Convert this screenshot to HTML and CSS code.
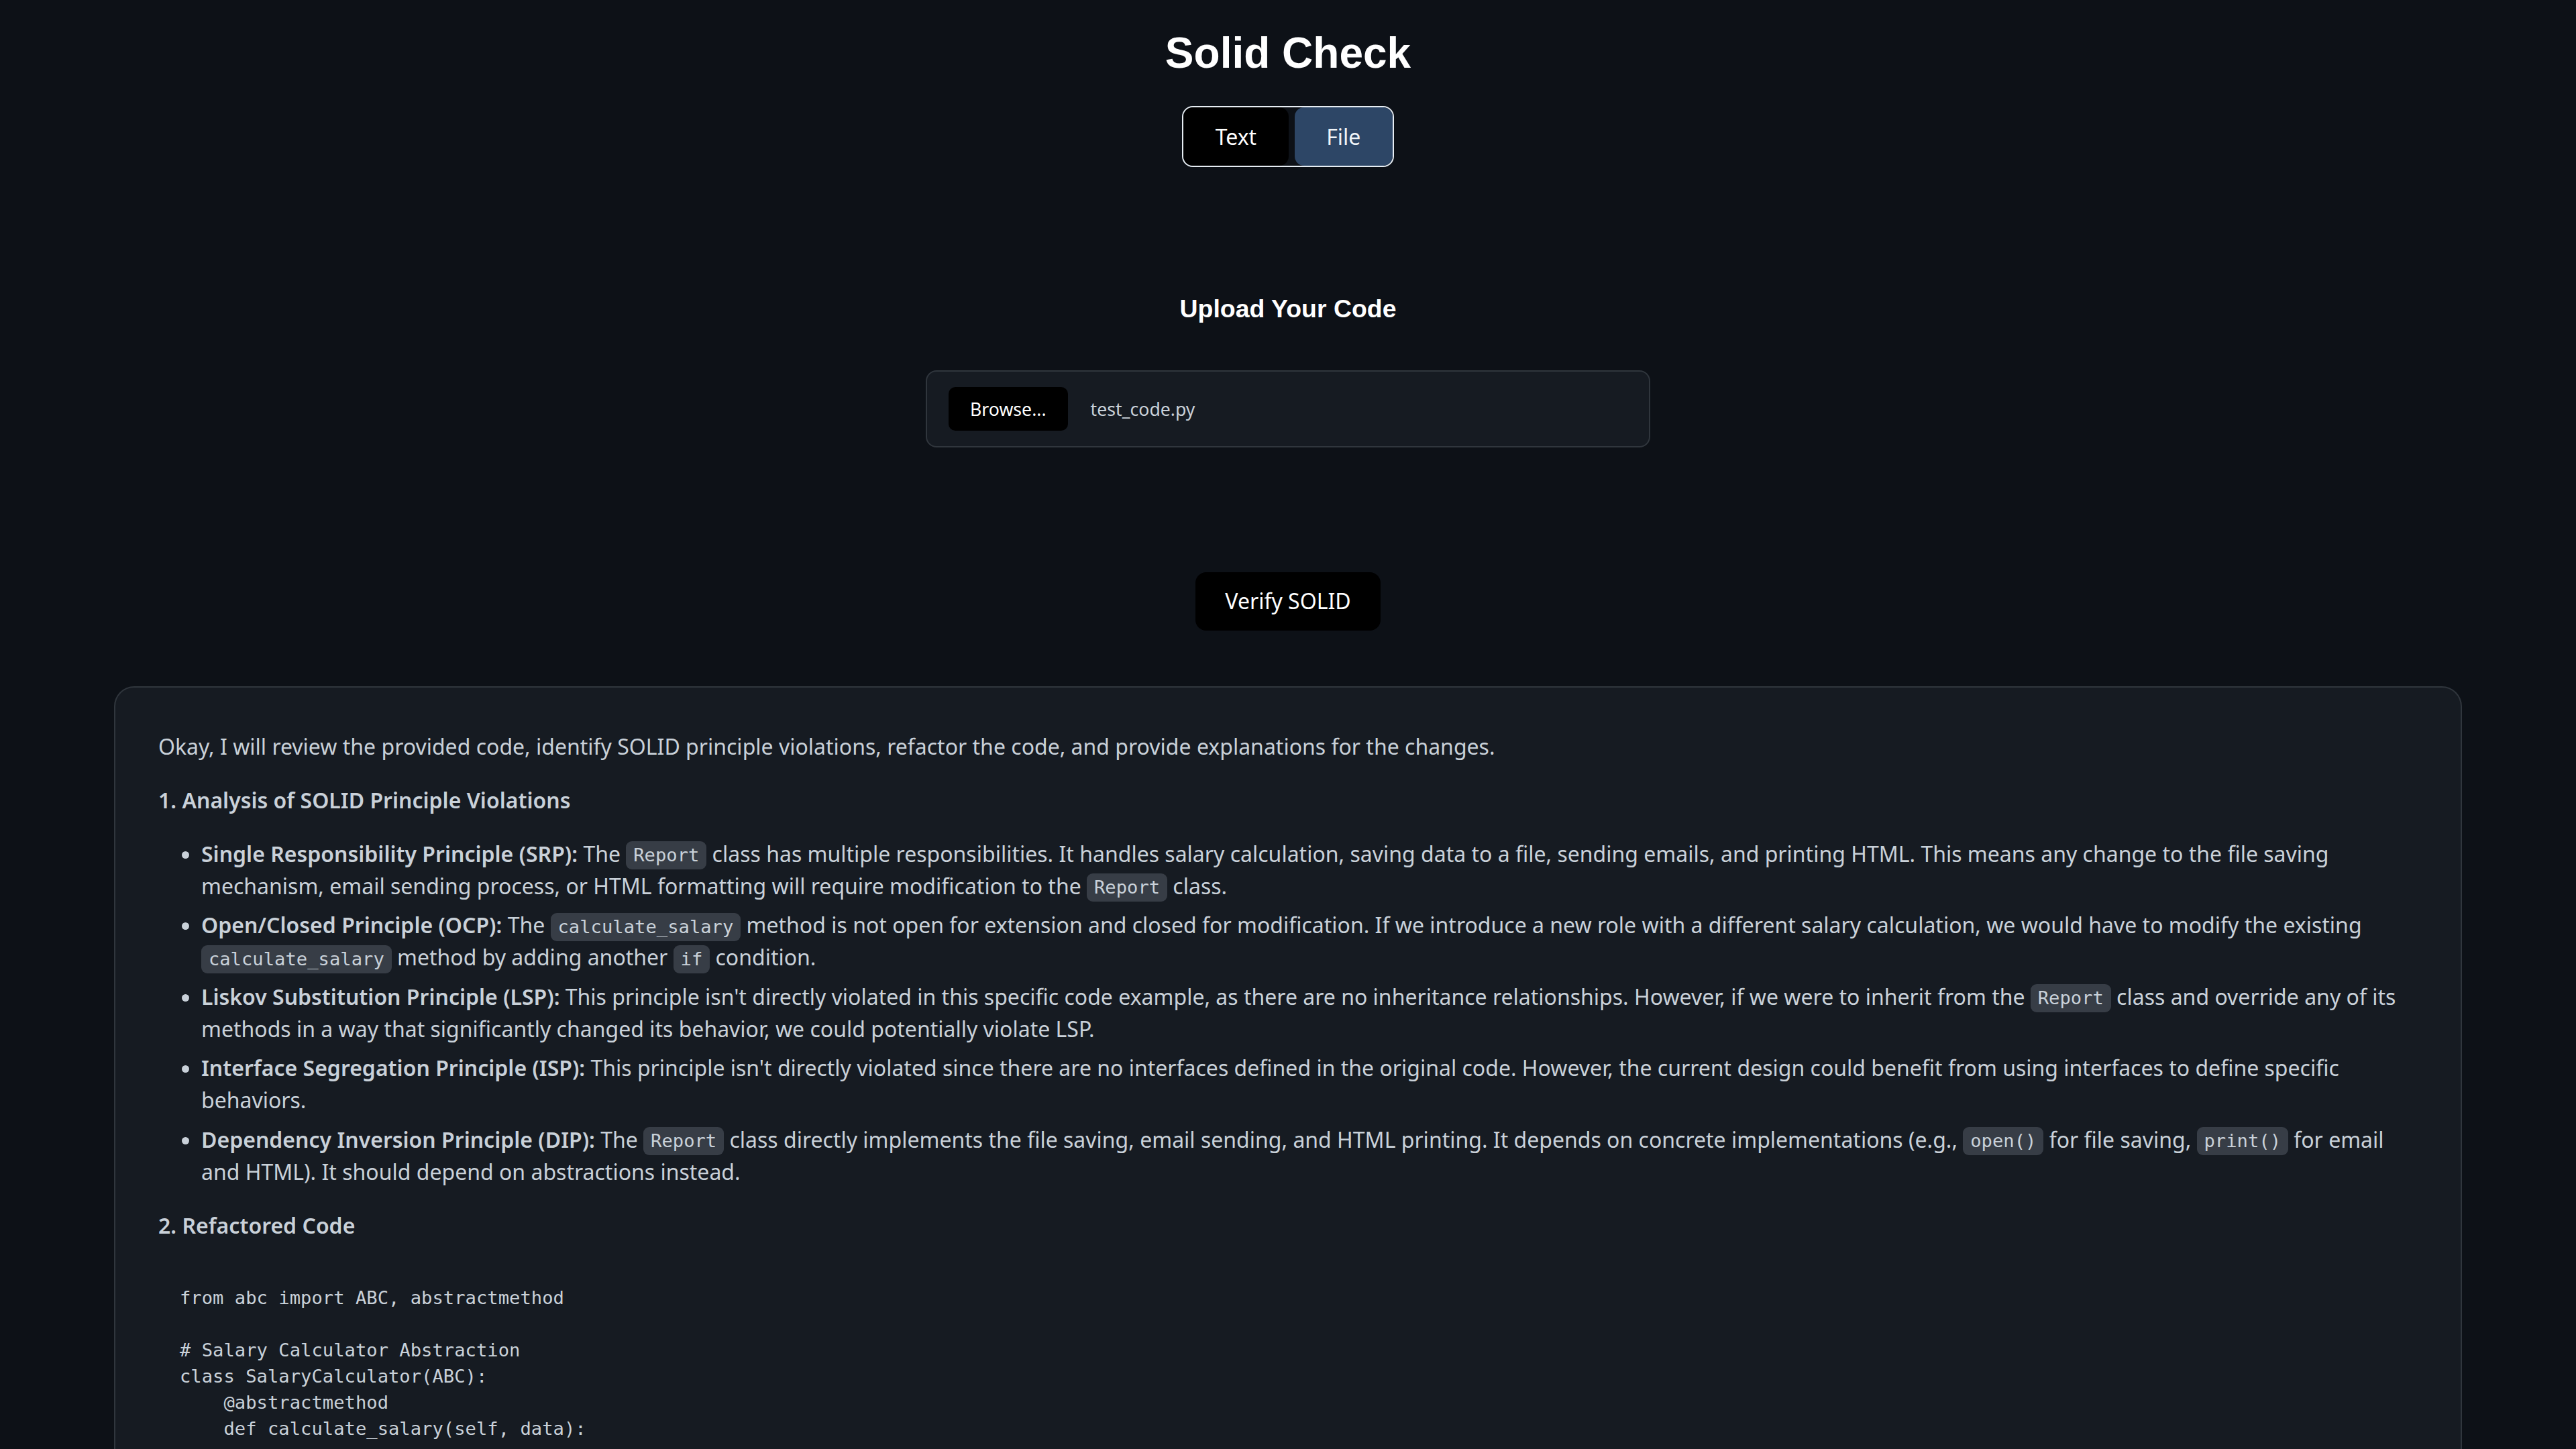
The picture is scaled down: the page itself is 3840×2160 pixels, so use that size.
FILE: index.html
```html
<!DOCTYPE html>
<html lang="en">
<head>
<meta charset="utf-8">
<title>Solid Check</title>
<link rel="stylesheet" href="styles.css">
</head>
<body>
<header class="header">
  <h1 class="title">Solid Check</h1>
  <div class="toggle-row">
    <div class="toggle">
      <button class="toggle-btn">Text</button>
      <button class="toggle-btn toggle-btn-active">File</button>
    </div>
  </div>
</header>

<section class="upload">
  <h3 class="upload-title">Upload Your Code</h3>
  <div class="file-box">
    <span class="browse-btn">Browse...</span>
    <span class="file-name">test_code.py</span>
  </div>
  <div class="verify-row">
    <button class="verify-btn">Verify SOLID</button>
  </div>
</section>

<main class="result">
  <p>Okay, I will review the provided code, identify SOLID principle violations, refactor the code, and provide explanations for the changes.</p>
  <p><strong>1. Analysis of SOLID Principle Violations</strong></p>
  <ul class="list">
    <li><strong>Single Responsibility Principle (SRP):</strong> The <code>Report</code> class has multiple responsibilities. It handles salary calculation, saving data to a file, sending emails, and printing HTML. This means any change to the file saving mechanism, email sending process, or HTML formatting will require modification to the <code>Report</code> class.</li>
    <li><strong>Open/Closed Principle (OCP):</strong> The <code>calculate_salary</code> method is not open for extension and closed for modification. If we introduce a new role with a different salary calculation, we would have to modify the existing <code>calculate_salary</code> method by adding another <code>if</code> condition.</li>
    <li><strong>Liskov Substitution Principle (LSP):</strong> This principle isn't directly violated in this specific code example, as there are no inheritance relationships. However, if we were to inherit from the <code>Report</code> class and override any of its methods in a way that significantly changed its behavior, we could potentially violate LSP.</li>
    <li><strong>Interface Segregation Principle (ISP):</strong> This principle isn't directly violated since there are no interfaces defined in the original code. However, the current design could benefit from using interfaces to define specific behaviors.</li>
    <li><strong>Dependency Inversion Principle (DIP):</strong> The <code>Report</code> class directly implements the file saving, email sending, and HTML printing. It depends on concrete implementations (e.g., <code>open()</code> for file saving, <code>print()</code> for email and HTML). It should depend on abstractions instead.</li>
  </ul>
  <p><strong>2. Refactored Code</strong></p>
  <pre class="code-block">from abc import ABC, abstractmethod

# Salary Calculator Abstraction
class SalaryCalculator(ABC):
    @abstractmethod
    def calculate_salary(self, data):
        pass

class DefaultSalaryCalculator(SalaryCalculator):
    def calculate_salary(self, data):
        return data["base_salary"]</pre>
</main>
</body>
</html>
```

FILE: styles.css
```css
html, body {
  margin: 0;
  padding: 0;
}

body {
  background: #0d1117;
  color: #c9d1d9;
  font-family: "Noto Sans", "Open Sans", sans-serif;
  font-size: 32px;
  line-height: 1.5;
  overflow: hidden;
}

.header {
  display: flex;
  flex-direction: column;
  align-items: center;
}

.title {
  margin: 42px 0 0;
  font-family: "Liberation Sans", Arial, sans-serif;
  font-size: 64px;
  font-weight: bold;
  line-height: normal;
  color: #ffffff;
}

.toggle-row {
  margin-top: 42px;
  display: flex;
  justify-content: center;
}

.toggle {
  display: flex;
  gap: 9px;
  border: 2px solid #e6edf3;
  border-radius: 16px;
  overflow: hidden;
}

.toggle-btn {
  font-family: "Noto Sans", sans-serif;
  font-size: 32px;
  line-height: 48px;
  padding: 19.6px 47.5px;
  border: none;
  border-radius: 14px;
  background: #000000;
  color: #ffffff;
  margin: 0;
}

.toggle-btn-active {
  background: #2d4666;
  color: #f0f4f8;
}

.upload {
  display: flex;
  flex-direction: column;
  align-items: center;
  margin-top: 190px;
}

.upload-title {
  margin: 0;
  font-family: "Liberation Sans", Arial, sans-serif;
  font-size: 37.44px;
  font-weight: bold;
  line-height: normal;
  color: #ffffff;
}

.file-box {
  margin-top: 70px;
  width: 1080px;
  box-sizing: border-box;
  display: flex;
  align-items: center;
  padding: 23px 32px;
  background: #161b22;
  border: 2px solid #30363d;
  border-radius: 16px;
}

.browse-btn {
  display: block;
  font-size: 26.67px;
  line-height: 36px;
  padding: 14.5px 32px;
  background: #000000;
  color: #ffffff;
  border-radius: 10px;
}

.file-name {
  margin-left: 34px;
  font-size: 26.67px;
  line-height: 36px;
  color: #c9d1d9;
}

.verify-row {
  margin-top: 186px;
  display: flex;
  justify-content: center;
}

.verify-btn {
  font-family: "Noto Sans", sans-serif;
  font-size: 32px;
  line-height: 48px;
  padding: 19.2px 44px;
  border: none;
  border-radius: 16px;
  background: #000000;
  color: #ffffff;
}

.result {
  display: block;
  width: 3500px;
  box-sizing: border-box;
  margin: 83px auto 0;
  padding: 32px 64px;
  background: #161b22;
  border: 2px solid #30363d;
  border-radius: 30px;
}

.result p {
  margin: 32px 0;
}

.result strong {
  font-weight: 600;
}

.list {
  margin: 32px 0;
  padding-left: 64px;
}

.list li {
  margin-bottom: 10.5px;
}

.list li:last-child {
  margin-bottom: 0;
}

.result code {
  font-family: "DejaVu Sans Mono", monospace;
  font-size: 27.2px;
  padding: 0.2em 0.4em;
  background: #373d46;
  border-radius: 9px;
  color: #c9d1d9;
}

.code-block {
  margin: 32px 0;
  padding: 32px;
  font-family: "DejaVu Sans Mono", monospace;
  font-size: 27.2px;
  line-height: 39px;
  color: #c9d1d9;
  background: transparent;
  white-space: pre;
}
```
